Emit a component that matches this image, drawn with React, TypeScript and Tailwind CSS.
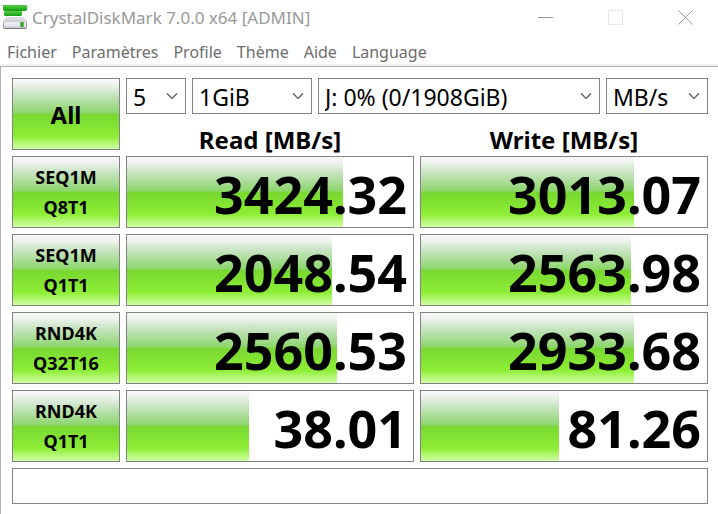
import { useState } from "react"
import clsx from "clsx"

const MENU_ITEMS = ["Fichier", "Paramètres", "Profile", "Thème", "Aide", "Language"]

const RESULTS = [
  { test: "SEQ1M", queue: "Q8T1", read: "3424.32", readBar: 75.5, write: "3013.07", writeBar: 74.5 },
  { test: "SEQ1M", queue: "Q1T1", read: "2048.54", readBar: 71.7, write: "2563.98", writeBar: 73.4 },
  { test: "RND4K", queue: "Q32T16", read: "2560.53", readBar: 73.4, write: "2933.68", writeBar: 74.5 },
  { test: "RND4K", queue: "Q1T1", read: "38.01", readBar: 42.7, write: "81.26", writeBar: 48.3 },
]

const GREEN =
  "bg-[linear-gradient(to_bottom,#f8f8f8_0%,#eef3ed_8%,#cde5c9_20%,#8ed66e_48%,#78d830_51%,#8eee36_82%,#d2ffa6_100%)]"

function DiskIcon() {
  return (
    <svg className="h-[26px] w-[26px] shrink-0" viewBox="0 0 26 26" aria-hidden="true">
      <defs>
        <linearGradient id="green" x1="0" y1="0" x2="0" y2="1">
          <stop offset="0" stopColor="#58cc48" />
          <stop offset="0.5" stopColor="#34b828" />
          <stop offset="1" stopColor="#189c12" />
        </linearGradient>
        <linearGradient id="drive" x1="0" y1="0" x2="0" y2="1">
          <stop offset="0" stopColor="#c4c4c8" />
          <stop offset="0.4" stopColor="#f0f0f8" />
          <stop offset="0.8" stopColor="#d4d4de" />
          <stop offset="1" stopColor="#8c8c92" />
        </linearGradient>
      </defs>
      <path d="M1 0h24v5l-1 1H2l-1-1z" fill="url(#green)" />
      <path d="M3 6h17v4l-1 1H3l-1-1V7z" fill="url(#green)" />
      <path d="M4 12h18l3 5H1z" fill="#dcdce0" />
      <rect x="1" y="15" width="24" height="9" rx="2" fill="url(#drive)" />
      <path d="M1.5 17v5.5M24.5 17v5.5" stroke="#9a9aa0" />
      <path d="M2 23.5h22" stroke="#7c7c82" />
      <rect x="18" y="17" width="4" height="5" fill="#78a870" />
      <rect x="19" y="17" width="2" height="5" fill="#2cb41c" />
    </svg>
  )
}

function TitleBar() {
  return (
    <header className="flex h-9 items-center pl-0.5">
      <DiskIcon />
      <h1 className="ml-1 flex-1 text-[17px] leading-9 whitespace-nowrap text-[#999999]">
        CrystalDiskMark 7.0.0 x64 [ADMIN]
      </h1>
      <div className="flex h-full shrink-0 gap-1.5 text-[#999999]">
        <button aria-label="Minimize" className="flex w-16 items-center justify-center">
          <svg className="h-4 w-4" viewBox="0 0 16 16" fill="none" stroke="currentColor">
            <path d="M0 7.5h15" />
          </svg>
        </button>
        <button aria-label="Maximize" disabled className="flex w-16 items-center justify-center">
          <svg className="h-4 w-4" viewBox="0 0 16 16" fill="none" stroke="#e8e8e8">
            <path d="M0.5 0.5h14v14h-14z" />
          </svg>
        </button>
        <button aria-label="Close" className="flex w-16 items-center justify-center">
          <svg className="h-4 w-4" viewBox="0 0 16 16" fill="none" stroke="currentColor">
            <path d="M0.5 0.5l14 14M14.5 0.5l-14 14" />
          </svg>
        </button>
      </div>
    </header>
  )
}

type DropDownProps = {
  label: string
  options: string[]
  className: string
}

function DropDown({ label, options, className }: DropDownProps) {
  const [value, setValue] = useState(options[0])

  return (
    <div className={clsx("relative h-9", className)}>
      <select
        aria-label={label}
        value={value}
        onChange={(e) => setValue(e.target.value)}
        className="h-full w-full appearance-none border border-[#838383] bg-white pt-0.5 pl-1.5 text-[23px] leading-8 text-black"
      >
        {options.map((option) => (
          <option key={option}>{option}</option>
        ))}
      </select>
      <svg
        className="pointer-events-none absolute top-3 right-2 h-3 w-3"
        viewBox="0 0 12 12"
        fill="none"
        stroke="#555555"
        strokeWidth="1.2"
        aria-hidden="true"
      >
        <path d="M1 3.5l5 5 5-5" />
      </svg>
    </div>
  )
}

function ResultCell({ value, bar }: { value: string; bar: number }) {
  return (
    <td className="p-0">
      <div className="relative h-[72px] border border-[#838383] bg-white">
        <div className={clsx("absolute inset-y-0 left-0", GREEN)} style={{ width: `${bar}%` }} />
        <span className="relative block pt-1 pr-1.5 text-right text-[52px] leading-[66px] font-bold">
          {value}
        </span>
      </div>
    </td>
  )
}

export default function App() {
  return (
    <div className="flex min-h-screen flex-col bg-white font-['Noto_Sans','Open_Sans',sans-serif] text-black">
      <TitleBar />
      <nav className="flex h-[30px] items-start gap-[15px] border-b-2 border-[#f0f0f0] pl-[7px] text-base text-[#6d6d6d]">
        {MENU_ITEMS.map((item) => (
          <button key={item} className="leading-8">
            {item}
          </button>
        ))}
      </nav>

      <main className="flex-1 border-t border-l border-[#b4b4b4] pt-[5px] pr-1 pl-[5px]">
        <table className="w-full table-fixed border-separate border-spacing-1.5">
          <colgroup>
            <col className="w-[108px]" />
            <col />
            <col />
          </colgroup>
          <thead>
            <tr>
              <td rowSpan={2} className="p-0">
                <button
                  className={clsx("h-[72px] w-full border border-[#838383] pt-0.5 text-2xl font-bold", GREEN)}
                >
                  All
                </button>
              </td>
              <td colSpan={2} className="p-0">
                <div className="flex gap-1.5">
                  <DropDown label="Test count" options={["5", "1", "3", "9"]} className="w-[60px]" />
                  <DropDown label="Test size" options={["1GiB", "4GiB", "16GiB"]} className="w-[120px]" />
                  <DropDown label="Drive" options={["J: 0% (0/1908GiB)"]} className="flex-1" />
                  <DropDown label="Unit" options={["MB/s", "GB/s", "IOPS"]} className="w-[102px]" />
                </div>
              </td>
            </tr>
            <tr className="text-2xl font-bold">
              <th scope="col" className="p-0 pt-2.5 leading-5">
                Read [MB/s]
              </th>
              <th scope="col" className="p-0 pt-2.5 leading-5">
                Write [MB/s]
              </th>
            </tr>
          </thead>
          <tbody>
            {RESULTS.map((row) => (
              <tr key={row.test + row.queue}>
                <th scope="row" className="p-0">
                  <button
                    className={clsx(
                      "flex h-[72px] w-full flex-col items-center justify-center border border-[#838383] text-lg leading-[30px] font-bold",
                      GREEN,
                    )}
                  >
                    <span>{row.test}</span>
                    <span>{row.queue}</span>
                  </button>
                </th>
                <ResultCell value={row.read} bar={row.readBar} />
                <ResultCell value={row.write} bar={row.writeBar} />
              </tr>
            ))}
          </tbody>
          <tfoot>
            <tr>
              <td colSpan={3} className="p-0">
                <input
                  type="text"
                  aria-label="Comment"
                  className="block h-9 w-full border border-[#838383] bg-white px-2 text-xl"
                />
              </td>
            </tr>
          </tfoot>
        </table>
      </main>
    </div>
  )
}
